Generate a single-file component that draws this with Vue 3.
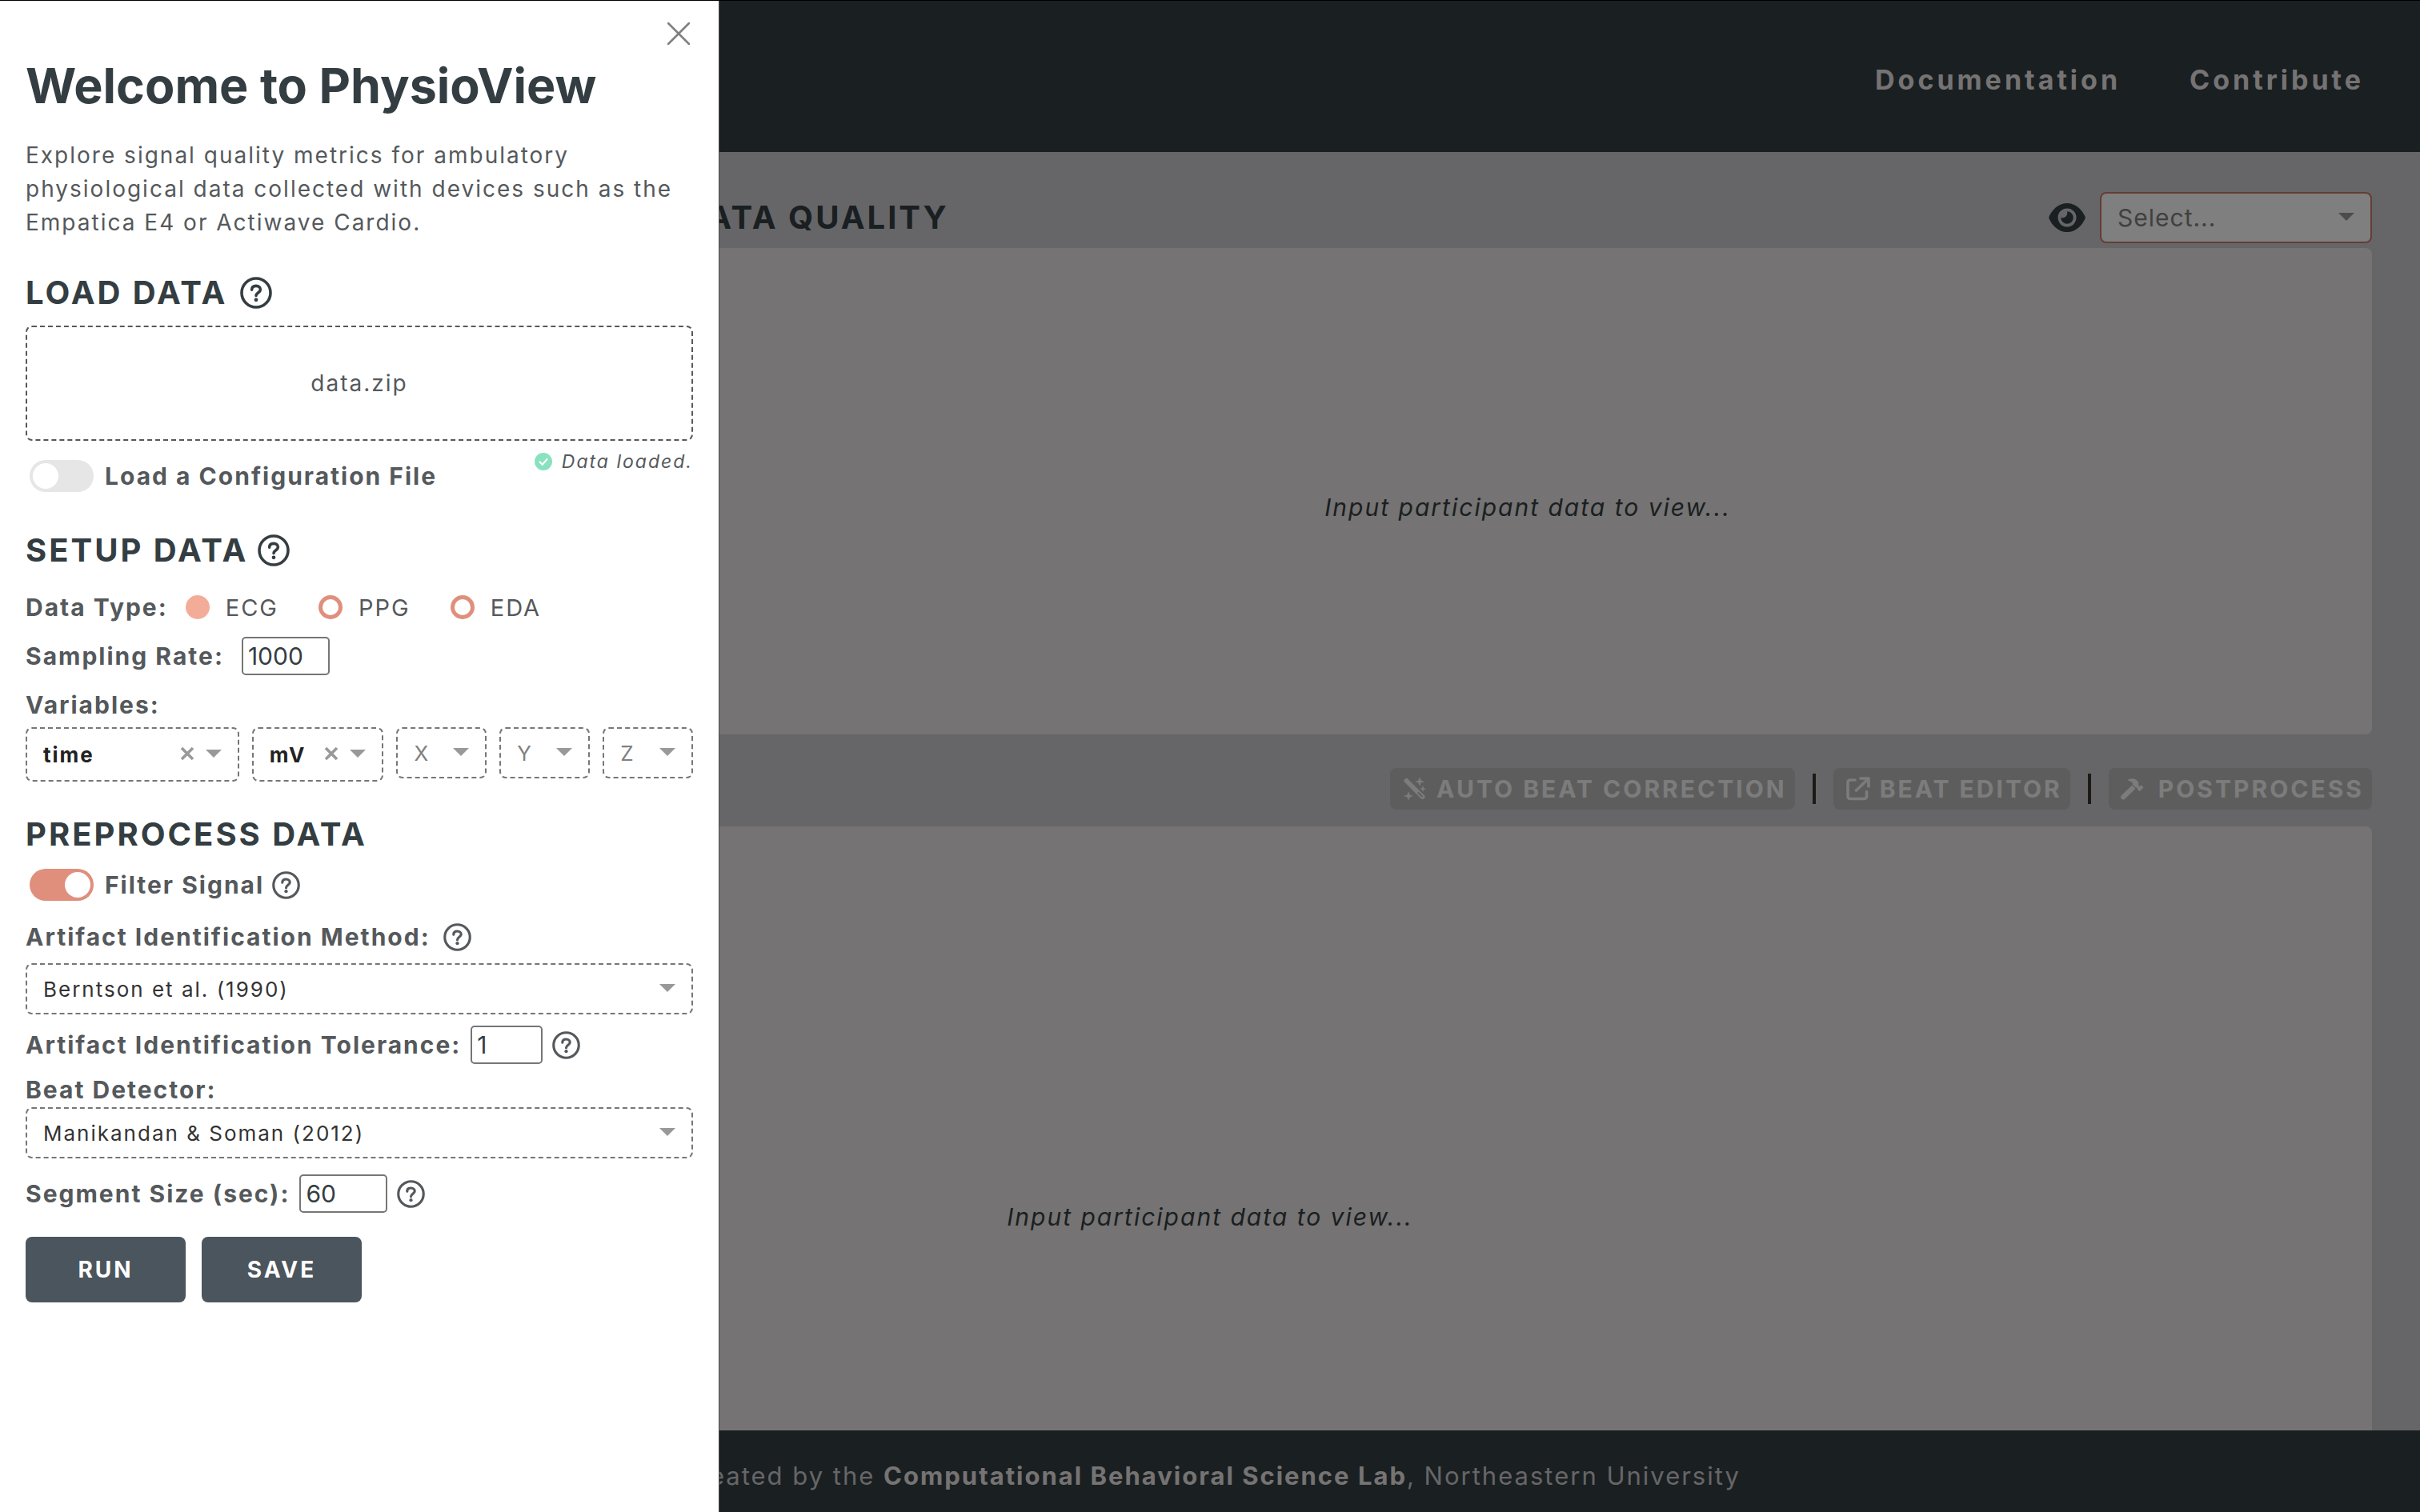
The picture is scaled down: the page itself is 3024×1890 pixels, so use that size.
<script setup>
import { ref } from 'vue'

const dataType = ref('ECG')
const types = ['ECG', 'PPG', 'EDA']
const samplingRate = ref('1000')
const tolerance = ref('1')
const segmentSize = ref('60')
const loadConfig = ref(false)
const filterSignal = ref(true)
const variables = [
  { id: 'time', text: 'time', chosen: true, kind: 'wide' },
  { id: 'signal', text: 'mV', chosen: true, kind: 'medium' },
  { id: 'x', text: 'X', chosen: false, kind: 'small' },
  { id: 'y', text: 'Y', chosen: false, kind: 'small' },
  { id: 'z', text: 'Z', chosen: false, kind: 'small' },
]
</script>

<template>
  <svg class="defs" aria-hidden="true">
    <symbol id="help" viewBox="0 0 40 40">
      <circle cx="20" cy="20" r="18" fill="none" stroke="currentColor" stroke-width="3.6" />
      <path d="M14.6 16.2C14.6 12.9 16.9 11.4 20 11.4C23.2 11.4 25.4 13.3 25.4 16C25.4 19.6 20 19.8 20 23.6" fill="none" stroke="currentColor" stroke-width="3.6" stroke-linecap="round" />
      <circle cx="20" cy="28.8" r="2.4" fill="currentColor" />
    </symbol>
    <symbol id="caret" viewBox="0 0 20 10"><path d="M0 0H20L10 10Z" fill="currentColor" /></symbol>
  </svg>

  <div class="page">
    <header class="topbar">
      <nav>
        <a href="#docs">Documentation</a>
        <a href="#contribute">Contribute</a>
      </nav>
    </header>

    <main>
      <div class="upper">
        <div class="summary"></div>
        <section class="quality">
          <div class="quality-head">
            <h2>DATA QUALITY</h2>
            <label class="eye" for="participant" aria-label="Participant">
              <svg viewBox="0 0 46 36"><path d="M23 0C11 0 3.5 10 .6 16.600A3.500 3.500 0 0 0 .6 19.400C3.500 26 11 36 23 36S42.500 26 45.400 19.400A3.500 3.500 0 0 0 45.400 16.600C42.500 10 35 0 23 0Z" fill="currentColor" /><circle cx="23" cy="18" r="11.500" fill="#ccccd0" /><path d="M23 10.200A7.800 7.800 0 1 1 15.200 18C20 19.500 24.500 15 23 10.200Z" fill="currentColor" /></svg>
            </label>
            <div class="drop participant">
              <select id="participant"><option>Select...</option></select>
              <svg class="caret"><use href="#caret" /></svg>
            </div>
          </div>
          <div class="panel chart"><p>Input participant data to view...</p></div>
        </section>
      </div>

      <div class="actions">
        <button type="button" disabled>
          <svg viewBox="0 0 30 30"><path d="M4.500 5L24.500 25" stroke="currentColor" stroke-width="6" stroke-linecap="round" /><path d="M19.500 20L24 24.500" stroke="#bbb" stroke-width="1.800" stroke-linecap="round" /><path d="M21 0L22.600 4.400L27 6L22.600 7.600L21 12L19.400 7.600L15 6L19.400 4.400ZM7 18L8.600 22.400L13 24L8.600 25.600L7 30L5.400 25.600L1 24L5.400 22.400ZM25 11L26.100 13.900L29 15L26.100 16.100L25 19L23.900 16.100L21 15L23.900 13.900Z" fill="currentColor" /></svg>
          <span>AUTO BEAT CORRECTION</span>
        </button>
        <i class="rule"></i>
        <button type="button" disabled>
          <svg viewBox="0 0 30 30"><path d="M11 4H5A3 3 0 0 0 2 7V24.500A3 3 0 0 0 5 27.500H22.500A3 3 0 0 0 25.500 24.500V18.500M18 2H28V12M27 3L12.500 17" fill="none" stroke="currentColor" stroke-width="3.600" stroke-linecap="round" stroke-linejoin="round" /></svg>
          <span>BEAT EDITOR</span>
        </button>
        <i class="rule"></i>
        <button type="button" disabled class="post">
          <svg viewBox="0 0 32 30"><path d="M10 3.500C14 .5 19.500 .5 23 4C25 6 25 8.500 25 11L26.500 12L28.500 10L31.500 13L26 18.500L23 15.500L23.500 14L20 12.500L17 9.500V7.500C15 5 12.500 4.500 10 3.500Z" fill="currentColor" /><path d="M17.500 13.500L4.500 26" stroke="currentColor" stroke-width="6.500" stroke-linecap="round" /><path d="M15.500 9L22.500 15.500" stroke="#bbb" stroke-width="1.200" /></svg>
          <span>POSTPROCESS</span>
        </button>
      </div>

      <div class="panel beats"><p>Input participant data to view...</p></div>
    </main>

    <footer>Created by the&nbsp;<strong>Computational Behavioral Science Lab</strong>, Northeastern University</footer>
  </div>

  <div class="backdrop"></div>

  <aside class="drawer">
    <button class="close" type="button" aria-label="Close">
      <svg viewBox="0 0 28 28"><path d="M1 1L27 27M27 1L1 27" stroke="currentColor" stroke-width="2.600" stroke-linecap="round" /></svg>
    </button>
    <h1>Welcome to PhysioView</h1>
    <p class="intro">Explore signal quality metrics for ambulatory physiological data collected with devices such as the Empatica E4 or Actiwave Cardio.</p>

    <h2 class="load">LOAD DATA <svg class="help large"><use href="#help" /></svg></h2>
    <button class="upload" type="button">data.zip</button>
    <div class="config">
      <label class="switch"><input v-model="loadConfig" type="checkbox" /><span>Load a Configuration File</span></label>
      <p class="status">
        <svg viewBox="0 0 22 22"><circle cx="11" cy="11" r="11" fill="#88e2c0" /><path d="M6.500 11.500L9.800 14.600L15.500 8" fill="none" stroke="#fff" stroke-width="2.200" stroke-linecap="round" /></svg>
        Data loaded.
      </p>
    </div>

    <h2 class="setup">SETUP DATA <svg class="help large"><use href="#help" /></svg></h2>
    <div class="types" role="radiogroup" aria-labelledby="type-label">
      <span id="type-label" class="name">Data Type:</span>
      <label v-for="t in types" :key="t"><input v-model="dataType" type="radio" name="type" :value="t" />{{ t }}</label>
    </div>
    <div class="field rate">
      <label class="name" for="rate">Sampling Rate:</label>
      <input id="rate" v-model="samplingRate" type="text" />
    </div>
    <span class="name variables-name">Variables:</span>
    <div class="variables">
      <div v-for="v in variables" :key="v.id" class="drop dashed" :class="[v.kind, { chosen: v.chosen }]">
        <select :aria-label="v.id"><option>{{ v.text }}</option></select>
        <button v-if="v.chosen" class="clear" type="button" aria-label="Clear">
          <svg viewBox="0 0 18 18"><path d="M2 2L16 16M16 2L2 16" stroke="currentColor" stroke-width="3.600" /></svg>
        </button>
        <svg class="caret"><use href="#caret" /></svg>
      </div>
    </div>

    <h2 class="preprocess">PREPROCESS DATA</h2>
    <div class="filter">
      <label class="switch"><input v-model="filterSignal" type="checkbox" /><span>Filter Signal</span></label>
      <svg class="help"><use href="#help" /></svg>
    </div>
    <div class="field method">
      <label class="name" for="method">Artifact Identification Method:</label>
      <svg class="help"><use href="#help" /></svg>
    </div>
    <div class="drop dashed">
      <select id="method"><option>Berntson et al. (1990)</option></select>
      <svg class="caret"><use href="#caret" /></svg>
    </div>
    <div class="field tolerance">
      <label class="name" for="tolerance">Artifact Identification Tolerance:</label>
      <input id="tolerance" v-model="tolerance" type="text" class="short" />
      <svg class="help"><use href="#help" /></svg>
    </div>
    <label class="name detector-name" for="detector">Beat Detector:</label>
    <div class="drop dashed">
      <select id="detector"><option>Manikandan &amp; Soman (2012)</option></select>
      <svg class="caret"><use href="#caret" /></svg>
    </div>
    <div class="field segment">
      <label class="name" for="segment">Segment Size (sec):</label>
      <input id="segment" v-model="segmentSize" type="text" />
      <svg class="help"><use href="#help" /></svg>
    </div>
    <div class="buttons">
      <button type="button">RUN</button>
      <button type="button">SAVE</button>
    </div>
  </aside>
</template>

<style>
body {
  background: #ccccd0;
  font-family: Inter, "Noto Sans", sans-serif;
}
</style>

<style scoped>
* { box-sizing: border-box; }
h1, h2, p { margin: 0; }
button, input, select { font: inherit; letter-spacing: inherit; color: inherit; }
svg { display: block; flex: none; }
.defs { position: absolute; width: 0; height: 0; }
.page { min-height: 100vh; display: flex; flex-direction: column; border-top: 1px solid #000; }
h2 { font-size: 40px; line-height: 48px; font-weight: 700; letter-spacing: 3px; color: #343e42; }

.topbar { height: 189px; background: #343e42; display: flex; align-items: center; justify-content: flex-end; padding: 8px 70px 0 0; }
nav { display: flex; gap: 86px; }
nav a { font-size: 34px; font-weight: 700; letter-spacing: 4px; line-height: 40px; color: #ebe6e6; text-decoration: none; }

main { flex: 1; padding: 48px 60px 0; display: flex; flex-direction: column; }
.upper { display: flex; gap: 10px; }
.summary { width: 27%; background: #ebe6e6; border-radius: 8px; margin-top: 72px; }
.quality { flex: 1; }
.quality-head { display: flex; align-items: center; height: 72px; padding-bottom: 5px; margin: 0; }
.quality-head h2 { flex: 1; }
.eye { color: #343e42; margin-right: 18px; }
.eye svg { width: 46px; height: 36px; }
.participant { width: 340px; }
.panel { background: #ebe6e6; border-radius: 8px; display: flex; align-items: center; justify-content: center; font-size: 30px; font-style: italic; letter-spacing: 2px; line-height: 40px; color: #343e42; }
.chart { height: 608px; padding-top: 40px; }
.actions { display: flex; justify-content: flex-end; align-items: center; height: 115px; padding-top: 21px; gap: 22px; }
.actions button { height: 52px; border: 0; border-radius: 8px; background: #bbb; display: flex; align-items: center; gap: 12px; padding: 0 10px 0 16px; font-size: 30px; font-weight: 700; letter-spacing: 3px; color: #f8f8f8; }
.actions svg { width: 30px; height: 30px; }
.actions .post { gap: 18px; padding: 0 10px 0 14px; }
.rule { width: 4px; height: 38px; background: #3a342c; }
.beats { flex: 1; padding-top: 220px; border-radius: 8px 8px 0 0; }
footer { height: 102px; background: #343e42; display: flex; align-items: center; justify-content: center; padding-top: 10px; font-size: 31px; letter-spacing: 2px; color: #ccccd0; }
footer strong { font-weight: 700; color: #ebe6e6; }

.backdrop { position: fixed; inset: 0; background: rgba(0, 0, 0, 0.5); }

.drawer { position: fixed; top: 1px; left: 0; bottom: 0; width: 899px; max-width: 100%; padding: 21px 32px; background: #fff; border-right: 1px solid #4c4c4e; color: #55595c; font-size: 28px; letter-spacing: 2px; overflow: hidden; display: flex; flex-direction: column; align-items: stretch; }
.close { align-self: flex-end; width: 36px; height: 40px; padding: 4px; border: 0; background: none; color: #808080; }
.close svg { width: 28px; height: 28px; }
h1 { font-size: 61px; line-height: 72px; font-weight: 700; letter-spacing: 0; color: #343e42; margin-top: 9px; }
.intro { line-height: 42px; margin-top: 30px; }
.load { margin-top: 43px; display: flex; align-items: center; gap: 16px; }
.setup { display: flex; align-items: center; gap: 12px; margin-top: 43px; }
.help { width: 35px; height: 35px; }
.help.large { width: 40px; height: 40px; }
.upload { height: 144px; margin-top: 17px; border: 2px dashed #55595c; border-radius: 8px; background: none; padding: 0; }
.config { display: flex; justify-content: space-between; height: 70px; align-items: flex-start; }
.switch { display: flex; align-items: center; gap: 14px; font-size: 30px; line-height: 40px; font-weight: 700; padding-left: 5px; }
.config .switch { margin-top: 24px; }
.switch input { appearance: none; margin: 0; width: 80px; height: 40px; border-radius: 20px; background: #e6e6e6; padding: 4px; display: flex; }
.switch input::before { content: ""; width: 32px; height: 32px; border-radius: 50%; background: #fff; }
.switch input:checked { background: #e08f7c; justify-content: flex-end; }
.status { display: flex; align-items: center; gap: 12px; margin-top: 12px; font-size: 23px; line-height: 28px; font-style: italic; }
.status svg { width: 22px; height: 22px; }
.name { font-size: 30px; line-height: 40px; font-weight: 700; }
.types { display: flex; align-items: center; height: 40px; margin-top: 27px; }
.types .name { margin-right: 22px; }
.types label { display: flex; align-items: center; gap: 20px; margin-right: 50px; font-size: 29px; }
.types input { appearance: none; width: 30px; height: 30px; margin: 0; border: 5px solid #e08f7c; border-radius: 50%; }
.types input:checked { background: #f3ac98; border-color: #f3ac98; }
.field { display: flex; align-items: center; }
.field input { width: 110px; height: 48px; padding: 0 6px; border: 2px solid #767676; border-radius: 5px; background: #fff; font-size: 30px; letter-spacing: 0; color: #343e42; }
.field input.short { width: 90px; }
.rate { margin-top: 17px; gap: 22px; }
.variables-name { margin-top: 17px; }
.variables { display: flex; align-items: flex-start; gap: 16px; margin-top: 8px; }
.drop { position: relative; height: 64px; color: #333; font-size: 26px; }
.drop select { appearance: none; width: 100%; height: 100%; padding: 0 50px 0 20px; border: 2px dashed #767676; border-radius: 8px; background: #fff; }
.participant select { border: 2px solid #cb7a68; padding: 0 50px 0 20px; color: #808080; font-size: 30px; letter-spacing: 1px; }
.caret { position: absolute; right: 22px; top: 26px; width: 20px; height: 10px; color: #999; pointer-events: none; }
.wide { flex: 267; }
.medium { flex: 165; }
.small { flex: 113; color: #808080; }
.small select { padding-right: 40px; }
.chosen { height: 68px; font-weight: 700; color: #222; }
.chosen .caret { top: 28px; }
.clear { position: absolute; right: 56px; top: 24px; width: 18px; height: 18px; padding: 0; border: 0; background: none; color: #999; }
.clear svg { width: 18px; height: 18px; }
.preprocess { margin-top: 42px; }
.filter { display: flex; align-items: center; gap: 10px; margin-top: 19px; }
.method { margin-top: 25px; margin-bottom: 13px; gap: 16px; }
.tolerance { margin-top: 14px; gap: 12px; }
.detector-name { margin: 12px 0 2px; }
.segment { margin-top: 20px; gap: 12px; }
.buttons { display: flex; gap: 20px; margin-top: 30px; }
.buttons button { width: 200px; height: 82px; border: 0; border-radius: 8px; background: #4b555d; color: #fff; font-weight: 700; letter-spacing: 3px; }
</style>
